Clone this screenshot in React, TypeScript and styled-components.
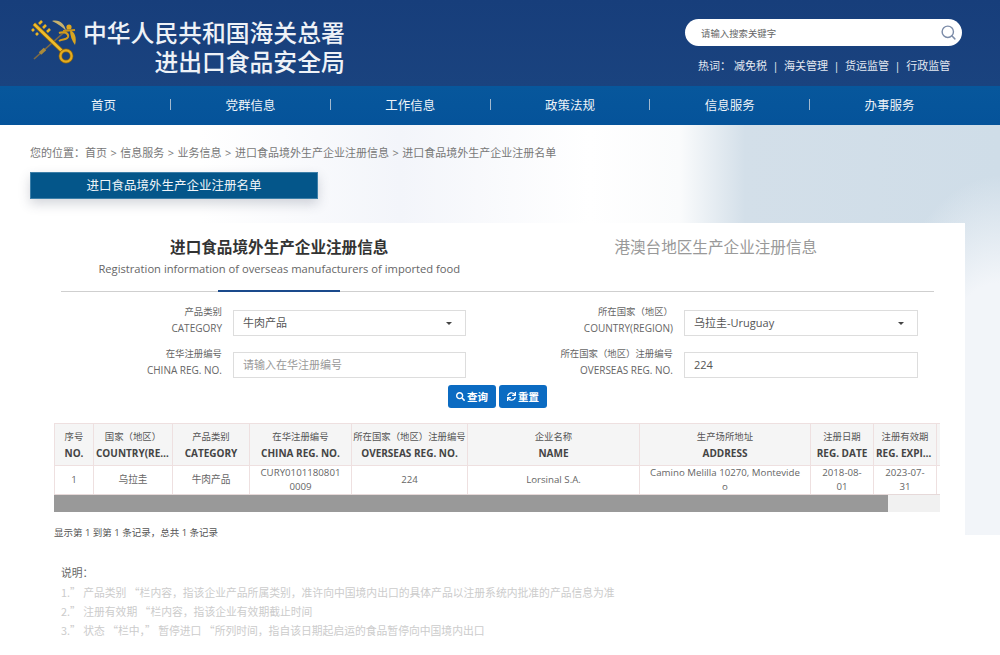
// App.tsx
import styled, { createGlobalStyle } from 'styled-components';
import { FaSearch, FaSync } from 'react-icons/fa';
import { Search } from 'lucide-react';

const CJK = '"Open Sans", "Noto Sans CJK SC", sans-serif';

const GlobalStyle = createGlobalStyle`
  html, body {
    margin: 0;
    padding: 0;
    background: #fff;
    font-family: ${CJK};
    overflow: hidden;
  }
  * { box-sizing: border-box; }
`;

const navItems = ['首页', '党群信息', '工作信息', '政策法规', '信息服务', '办事服务'];
const hotWords = ['减免税', '海关管理', '货运监管', '行政监管'];
const crumbs = ['首页', '信息服务', '业务信息', '进口食品境外生产企业注册信息', '进口食品境外生产企业注册名单'];

const columns = [
  { zh: '序号', en: 'NO.', value: '1', width: 39 },
  { zh: '国家（地区）', en: 'COUNTRY(REGION)', value: '乌拉圭', width: 79 },
  { zh: '产品类别', en: 'CATEGORY', value: '牛肉产品', width: 77 },
  { zh: '在华注册编号', en: 'CHINA REG. NO.', value: 'CURY01011808010009', width: 102 },
  { zh: '所在国家（地区）注册编号', en: 'OVERSEAS REG. NO.', value: '224', width: 116 },
  { zh: '企业名称', en: 'NAME', value: 'Lorsinal S.A.', width: 172 },
  { zh: '生产场所地址', en: 'ADDRESS', value: 'Camino Melilla 10270, Montevideo', width: 171 },
  { zh: '注册日期', en: 'REG. DATE', value: '2018-08-01', width: 63 },
  { zh: '注册有效期', en: 'REG. EXPIRY DATE', value: '2023-07-31', width: 63 },
  { zh: '', en: '', value: '', width: 60 },
];

const notes = [
  '1.” 产品类别 “栏内容，指该企业产品所属类别，准许向中国境内出口的具体产品以注册系统内批准的产品信息为准',
  '2.” 注册有效期 “栏内容，指该企业有效期截止时间',
  '3.” 状态 “栏中，” 暂停进口 “所列时间，指自该日期起启运的食品暂停向中国境内出口',
];

const Logo = () => (
  <svg width="48" height="50" viewBox="0 0 48 50" fill="none">
    {/* staff with the snake round it */}
    <path d="M39 9 L3 41" stroke="#7d6a45" strokeWidth="1.6" />
    <path d="M14 31 L9 35.5" stroke="#a98a3c" strokeWidth="3.6" />
    <path d="M28 15 C33 13 38 15 37 19 C36 22 31 21 28 23" stroke="#d29c1e" strokeWidth="2" />
    {/* wings */}
    <path d="M21 3 C28 1 34 6 35 13 C32 9 27 6 21 3 Z" fill="#c8b26c" />
    <path d="M39 12 C44 14 46 20 44 27 C41 23 39 18 39 12 Z" fill="#d9a520" />
    <circle cx="38" cy="9" r="2.6" fill="#e0a81c" />
    <path d="M32 13 L44 12" stroke="#c9931a" strokeWidth="1.8" />
    {/* key */}
    <path d="M3 6 L31 33" stroke="#8a6412" strokeWidth="4.2" />
    <path d="M3 6 L31 33" stroke="#f0bd2b" strokeWidth="2.6" />
    <path d="M8 6 L11 3 M12 10 L15 7 M16 14 L19 11 M3 11 L1 13 M7 15 L5 17" stroke="#e8b422" strokeWidth="2.6" />
    <circle cx="35" cy="38" r="5.6" stroke="#8a6412" strokeWidth="3.6" />
    <circle cx="35" cy="38" r="5.6" stroke="#e3ac20" strokeWidth="2.2" />
  </svg>
);

export default function App() {
  return (
    <>
      <GlobalStyle />
      <TopBar>
        <Brand>
          <Logo />
          <BrandText>
            <div>中华人民共和国海关总署</div>
            <div>进出口食品安全局</div>
          </BrandText>
        </Brand>
        <SearchArea>
          <SearchBox>
            <SearchHint>请输入搜索关键字</SearchHint>
            <Search size={17} color="#7c8ca8" strokeWidth={2} />
          </SearchBox>
          <HotRow>
            <HotLabel>热词：</HotLabel>
            {hotWords.map((word, i) => (
              <HotWord key={word} $first={i === 0}>{word}</HotWord>
            ))}
          </HotRow>
        </SearchArea>
      </TopBar>

      <Nav>
        {navItems.map((item, i) => (
          <NavItem key={item} $last={i === navItems.length - 1}>{item}</NavItem>
        ))}
      </Nav>

      <Main>
        <Breadcrumb>
          您的位置：
          {crumbs.map((c, i) => (
            <span key={c}>{i > 0 && <CrumbArrow>&gt;</CrumbArrow>}{c}</span>
          ))}
        </Breadcrumb>
        <Banner>进口食品境外生产企业注册名单</Banner>

        <Card>
          <Tabs>
            <Tab $active>
              <TabTitle $active>进口食品境外生产企业注册信息</TabTitle>
              <TabSub>Registration information of overseas manufacturers of imported food</TabSub>
            </Tab>
            <Tab>
              <TabTitle>港澳台地区生产企业注册信息</TabTitle>
            </Tab>
          </Tabs>

          <FormGrid>
            <FieldLabel><LabelZh>产品类别</LabelZh>CATEGORY</FieldLabel>
            <SelectBox>牛肉产品<Caret /></SelectBox>
            <FieldLabel><LabelZh>所在国家（地区）</LabelZh>COUNTRY(REGION)</FieldLabel>
            <SelectBox>乌拉圭-Uruguay<Caret /></SelectBox>
            <FieldLabel><LabelZh>在华注册编号</LabelZh>CHINA REG. NO.</FieldLabel>
            <TextInput placeholder="请输入在华注册编号" readOnly />
            <FieldLabel><LabelZh>所在国家（地区）注册编号</LabelZh>OVERSEAS REG. NO.</FieldLabel>
            <TextInput value="224" readOnly />
          </FormGrid>

          <Buttons>
            <ActionButton><FaSearch size={9} />查询</ActionButton>
            <ActionButton><FaSync size={9} />重置</ActionButton>
          </Buttons>

          <TableWrap>
            <Table>
              <colgroup>
                {columns.map((c, i) => <col key={i} style={{ width: c.width }} />)}
              </colgroup>
              <thead>
                <tr>
                  {columns.map((c, i) => (
                    <HeadCell key={i}>
                      <HeadZh>{c.zh}</HeadZh>
                      <HeadEn>{c.en}</HeadEn>
                    </HeadCell>
                  ))}
                </tr>
              </thead>
              <tbody>
                <tr>
                  {columns.map((c, i) => <BodyCell key={i}>{c.value}</BodyCell>)}
                </tr>
              </tbody>
            </Table>
            <ScrollTrack><ScrollThumb /></ScrollTrack>
          </TableWrap>

          <PageInfo>显示第 1 到第 1 条记录，总共 1 条记录</PageInfo>

          <Notes>
            <NotesTitle>说明：</NotesTitle>
            {notes.map((n) => <NoteLine key={n}>{n}</NoteLine>)}
          </Notes>
        </Card>
      </Main>
    </>
  );
}

const TopBar = styled.header`
  height: 86px;
  background: linear-gradient(180deg, #173e7b 0%, #1a437f 100%);
  display: flex;
  justify-content: space-between;
  padding: 0 38px 0 31px;
`;

const Brand = styled.div`
  display: flex;
  align-items: flex-start;
  gap: 4px;
  padding-top: 18px;
`;

const BrandText = styled.div`
  padding-top: 2px;
  font-family: "Liberation Serif", "Noto Sans CJK SC", serif;
  font-size: 23.8px;
  font-weight: 500;
  line-height: 29px;
  color: #eef2f7;
  text-align: right;
`;

const SearchArea = styled.div`
  width: 277px;
  padding-top: 19px;
`;

const SearchBox = styled.div`
  height: 27px;
  background: #fff;
  border-radius: 14px;
  display: flex;
  align-items: center;
  justify-content: space-between;
  padding: 0 5px 0 16px;
`;

const SearchHint = styled.span`
  font-size: 9.4px;
  color: #666;
`;

const HotRow = styled.div`
  display: flex;
  align-items: center;
  height: 16px;
  margin-top: 11px;
  padding-left: 13px;
  font-size: 11px;
  color: #e4e9f1;
  white-space: nowrap;
`;

const HotLabel = styled.span`
  width: 36px;
`;

const HotWord = styled.span<{ $first: boolean }>`
  ${({ $first }) => !$first && `
    margin-left: 5.5px;
    &::before {
      content: '|';
      margin-right: 5.5px;
    }
  `}
`;

const Nav = styled.nav`
  height: 39px;
  background: linear-gradient(180deg, #07579c 0%, #05539a 100%);
  display: flex;
  align-items: center;
  padding: 0 31px 3px 37px;
`;

const NavItem = styled.a<{ $last: boolean }>`
  flex: 1;
  height: 11px;
  display: flex;
  align-items: center;
  justify-content: center;
  font-size: 12.5px;
  color: #eef3f8;
  border-right: ${({ $last }) => ($last ? 'none' : '1px solid #a3b9cf')};
  &:first-child { flex: 0 0 134px; }
`;

const Main = styled.main`
  padding: 20px 35px 0 30px;
  height: 530px;
  background:
    radial-gradient(ellipse 130px 240px at 100% 290px, #f2f5f9 55%, rgba(242, 245, 249, 0) 100%) left top / 100% 410px no-repeat,
    linear-gradient(90deg, #fff 0px, #fff 200px, #f3f5fa 400px, #fff 590px, #fafbfc 680px, #d3dfe9 745px, #cfdde8 1000px) left top / 100% 410px no-repeat;
`;

const Breadcrumb = styled.div`
  height: 16px;
  line-height: 16px;
  font-size: 11px;
  color: #777;
  white-space: nowrap;
`;

const CrumbArrow = styled.span`
  margin: 0 3.5px;
`;

const Banner = styled.div`
  width: 288px;
  height: 27px;
  margin-top: 11px;
  background: #04568a;
  border: 1px solid #3d7fa8;
  color: #f0f5f9;
  font-size: 12.5px;
  line-height: 25px;
  text-align: center;
  box-shadow: 0 5px 12px rgba(60, 70, 90, 0.22);
`;

const Card = styled.section`
  margin-top: 24px;
  background: #fff;
  padding: 14px 31px 0;
`;

const Tabs = styled.div`
  display: grid;
  grid-template-columns: 1fr 1fr;
  height: 55px;
  border-bottom: 1px solid #cfcfcf;
`;

const Tab = styled.div<{ $active?: boolean }>`
  text-align: center;
  position: relative;
  ${({ $active }) => $active && `
    &::after {
      content: '';
      position: absolute;
      left: 157px;
      bottom: -1px;
      width: 122px;
      height: 2px;
      background: #1a4a8c;
    }
  `}
`;

const TabTitle = styled.div<{ $active?: boolean }>`
  font-size: 15.6px;
  line-height: 20px;
  font-weight: ${({ $active }) => ($active ? 700 : 400)};
  color: ${({ $active }) => ($active ? '#333' : '#999')};
`;

const TabSub = styled.div`
  font-size: 11.2px;
  line-height: 16px;
  margin-top: 4px;
  color: #666;
  white-space: nowrap;
`;

const FormGrid = styled.div`
  display: grid;
  grid-template-columns: 172px 233px 218px 234px;
  grid-auto-rows: 26px;
  row-gap: 16px;
  margin-top: 18px;
`;

const FieldLabel = styled.div`
  margin-top: -6px;
  padding-right: 11px;
  text-align: right;
  font-size: 10px;
  line-height: 16px;
  color: #666;
  white-space: nowrap;
`;

const LabelZh = styled.div`
  font-size: 9.4px;
`;

const SelectBox = styled.div`
  position: relative;
  border: 1px solid #ddd;
  padding: 0 9px;
  font-size: 11px;
  line-height: 24px;
  color: #555;
  background: #fff;
`;

const Caret = styled.span`
  position: absolute;
  right: 13px;
  top: 11px;
  border-left: 3px solid transparent;
  border-right: 3px solid transparent;
  border-top: 3px solid #444;
`;

const TextInput = styled.input`
  border: 1px solid #ddd;
  padding: 0 9px 2px;
  font-family: ${CJK};
  font-size: 11px;
  color: #555;
  outline: none;
  min-width: 0;
  &::placeholder { color: #999; }
`;

const Buttons = styled.div`
  display: flex;
  gap: 3px;
  margin-top: 7px;
  padding-left: 387px;
`;

const ActionButton = styled.button`
  width: 48px;
  height: 23px;
  border: none;
  border-radius: 3px;
  background: #0b6bc2;
  color: #fff;
  font-family: ${CJK};
  font-size: 10.5px;
  font-weight: 600;
  display: flex;
  align-items: center;
  justify-content: center;
  gap: 2px;
  padding: 0;
`;

const TableWrap = styled.div`
  width: 886px;
  margin: 15px 0 0 -7px;
  overflow: hidden;
`;

const Table = styled.table`
  table-layout: fixed;
  width: 942px;
  border-collapse: collapse;
  border-top: 1px solid #eee0e0;
  border-left: 1px solid #eee0e0;
`;

const HeadCell = styled.th`
  height: 42px;
  padding: 0;
  background: #f5f5f5;
  border: 1px solid #eee0e0;
  border-top: none;
  border-left: none;
  text-align: center;
`;

const HeadZh = styled.div`
  min-height: 17px;
  line-height: 17px;
  font-size: 9.4px;
  font-weight: 400;
  color: #555;
  white-space: nowrap;
`;

const HeadEn = styled.div`
  min-height: 17px;
  line-height: 17px;
  padding: 0 2px;
  font-size: 10px;
  font-weight: 700;
  color: #444;
  white-space: nowrap;
  overflow: hidden;
  text-overflow: ellipsis;
`;

const BodyCell = styled.td`
  height: 29px;
  padding: 0 9px;
  border-right: 1px solid #eee0e0;
  border-bottom: 1px solid #e6d9d9;
  text-align: center;
  font-size: 9.7px;
  line-height: 14px;
  color: #666;
  word-break: break-all;
`;

const ScrollTrack = styled.div`
  height: 17px;
  background: #f1f1f1;
`;

const ScrollThumb = styled.div`
  width: 834px;
  height: 100%;
  background: #999;
`;

const PageInfo = styled.div`
  margin: 14px 0 0 -7px;
  font-size: 9.5px;
  line-height: 14px;
  color: #555;
`;

const Notes = styled.div`
  margin-top: 23px;
  font-family: "Noto Sans CJK SC", sans-serif;
  font-size: 10.8px;
  line-height: 19px;
`;

const NotesTitle = styled.div`
  color: #666;
  padding-bottom: 1px;
`;

const NoteLine = styled.div`
  color: #ccc;
  white-space: nowrap;
`;
